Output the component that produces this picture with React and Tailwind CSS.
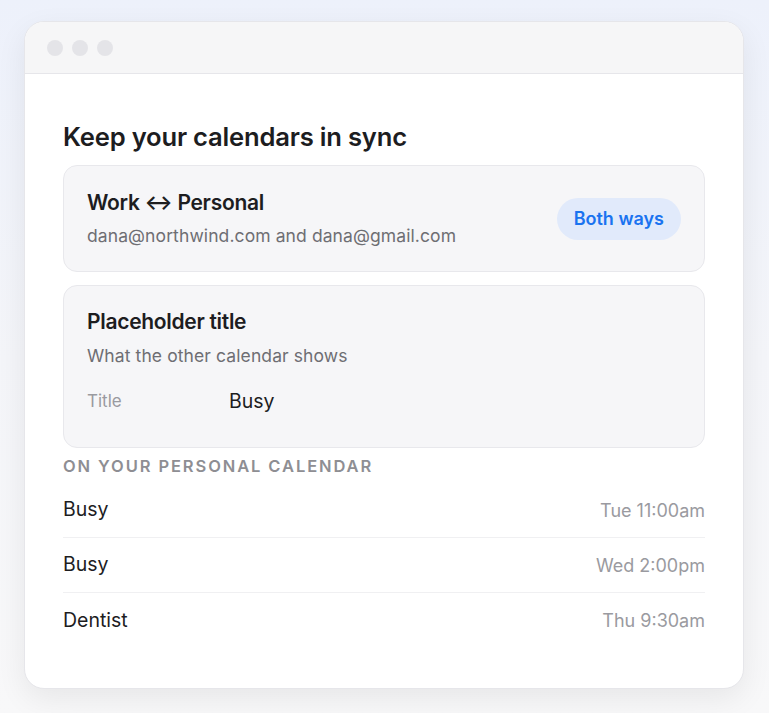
import React from "react";

const rows = [
  { title: "Busy", when: "Tue 11:00am" },
  { title: "Busy", when: "Wed 2:00pm" },
  { title: "Dentist", when: "Thu 9:30am" },
];

const App = () => {
  return (
    <div
      className="min-h-screen bg-gradient-to-b from-[#edf1fb] via-[#f4f5f9] to-[#f8f8f9] pt-[21px] pl-[24px] pr-[25px] pb-[24px]"
      style={{ fontFamily: "Inter, 'Noto Sans', sans-serif" }}
    >
      <div className="w-[720px] rounded-[20px] border border-[#e6e6ea] bg-white shadow-[0_10px_30px_rgba(0,0,0,0.07)] overflow-hidden">
        <div className="h-[52px] bg-[#f6f6f7] border-b border-[#e6e6ea] flex items-center gap-[9px] pl-[22px]">
          <span className="w-4 h-4 rounded-full bg-[#e4e4e8]"></span>
          <span className="w-4 h-4 rounded-full bg-[#e4e4e8]"></span>
          <span className="w-4 h-4 rounded-full bg-[#e4e4e8]"></span>
        </div>

        <div className="px-[38px] pt-[47px] pb-[40px]">
          <h1 className="text-[25.6px] font-semibold text-[#1d1d1f] tracking-[-0.2px] leading-[32px]">
            Keep your calendars in sync
          </h1>

          <div className="mt-[12px] rounded-[14px] border border-[#e8e8ec] bg-[#f6f6f8] px-[23px] h-[107px] flex items-center justify-between">
            <div>
              <p className="text-[21px] font-semibold text-[#1d1d1f] leading-[26px] tracking-[-0.3px]">
                Work ↔ Personal
              </p>
              <p className="mt-[9px] text-[17.5px] text-[#6e6e73] leading-[22px] tracking-[0.1px]">
                dana@northwind.com and dana@gmail.com
              </p>
            </div>
            <span className="h-[42px] px-[17px] rounded-full bg-[#e1eafb] text-[#1a73f0] text-[18px] font-semibold flex items-center">
              Both ways
            </span>
          </div>

          <div className="mt-[13px] rounded-[14px] border border-[#e8e8ec] bg-[#f6f6f8] px-[23px] pt-[23px] h-[163px]">
            <p className="text-[21px] font-semibold text-[#1d1d1f] leading-[26px] tracking-[-0.3px]">
              Placeholder title
            </p>
            <p className="mt-[10px] text-[17.5px] text-[#6e6e73] leading-[22px] tracking-[0.1px]">
              What the other calendar shows
            </p>
            <div className="mt-[20px] flex items-center">
              <span className="w-[142px] text-[17px] text-[#9a9aa0]">Title</span>
              <span className="text-[19.5px] text-[#1d1d1f]">Busy</span>
            </div>
          </div>

          <p className="mt-[8px] text-[16.5px] font-semibold tracking-[1.9px] text-[#8e8e93] leading-[20px]">
            ON YOUR PERSONAL CALENDAR
          </p>

          <div className="mt-[7px]">
            {rows.map((row, i) => (
              <div
                key={i}
                className={`h-[55px] flex items-center justify-between ${i < rows.length - 1 ? "border-b border-[#f0f0f2]" : ""}`}
              >
                <span className="text-[19.5px] text-[#1d1d1f]">{row.title}</span>
                <span className="text-[18px] text-[#9a9aa0]">{row.when}</span>
              </div>
            ))}
          </div>
        </div>
      </div>
    </div>
  );
};

export default App;
